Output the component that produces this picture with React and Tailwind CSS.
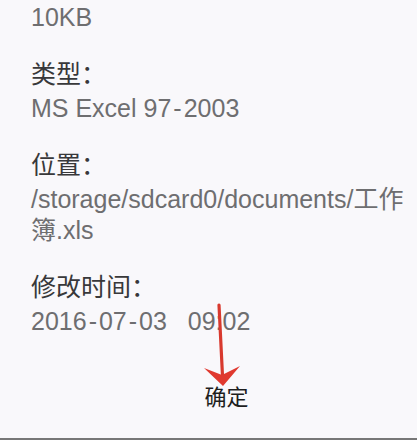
import React from "react";

const latin = { fontFamily: '"Liberation Sans", "Noto Sans CJK SC", sans-serif' };

function Val({ children }) {
  // render hyphens a little wider like the reference font
  const parts = String(children).split("-");
  return (
    <div className="text-[25px] leading-[31px] text-[#6e6e70] whitespace-pre-wrap" style={latin}>
      {parts.map((p, i) => (
        <React.Fragment key={i}>
          {i > 0 && <span className="px-[2px]">-</span>}
          {p}
        </React.Fragment>
      ))}
    </div>
  );
}

function Label({ children }) {
  return (
    <div className="text-[25px] leading-[30px] text-[#38383a] mb-[4px]" style={latin}>
      {children}
    </div>
  );
}

export default function App() {
  return (
    <div className="relative w-[417px] h-[440px] overflow-hidden bg-[#f9f8fb] flex flex-col">
      <div className="flex flex-col pl-[31px] pr-[4px] pt-[2px] gap-[26px]">
        <div>
          <Val>10KB</Val>
        </div>
        <div>
          <Label>类型：</Label>
          <Val>MS Excel 97-2003</Val>
        </div>
        <div>
          <Label>位置：</Label>
          <Val>/storage/sdcard0/documents/工作簿.xls</Val>
        </div>
        <div>
          <Label>修改时间：</Label>
          <Val>{"2016-07-03   09:02"}</Val>
        </div>
      </div>
      <div className="flex justify-center pl-[36px] mt-[46px]">
        <div className="text-[22px] leading-[30px] text-[#1e1e1e]" style={latin}>
          确定
        </div>
      </div>
      <div className="mt-auto h-[2px] bg-[#777777]" />
      <svg
        className="absolute left-0 top-0 pointer-events-none"
        width="417"
        height="440"
        viewBox="0 0 417 440"
      >
        <line x1="219" y1="305" x2="222.5" y2="376" stroke="#d8392e" strokeWidth="3.2" strokeLinecap="round" />
        <polygon points="204,368 222,375 240,366 223,386" fill="#e0392f" />
      </svg>
    </div>
  );
}
